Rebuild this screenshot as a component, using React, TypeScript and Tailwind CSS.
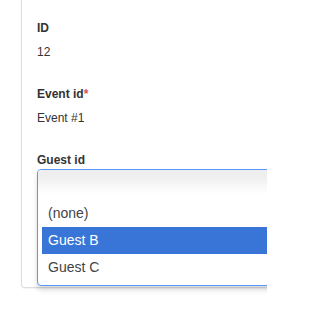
import React from "react";

export default function App() {
  return (
    <div className="w-[267px] h-[326px] overflow-hidden bg-white font-['Liberation_Sans',Arial,sans-serif] text-[#333]">
      <div className="ml-[21px] w-[400px] border-l border-b border-[#dddddd] rounded-bl-[4px] pl-[15px] pt-[20px] pb-[1px] shadow-[0_1px_1px_rgba(0,0,0,0.05)]">
        <div className="text-[12px] leading-[17px] font-bold">ID</div>
        <div className="mt-[7px] text-[12px] leading-[17px]">12</div>

        <div className="mt-[25px] text-[12px] leading-[17px] font-bold">
          Event id<span className="text-[#d9534f]">*</span>
        </div>
        <div className="mt-[7px] text-[12px] leading-[17px]">Event #1</div>

        <div className="mt-[25px] text-[12px] leading-[17px] font-bold">Guest id</div>

        <div className="w-[300px] border border-[#5897fb] rounded-[4px] bg-white shadow-[0_4px_5px_rgba(0,0,0,0.15)] overflow-hidden">
          <div className="h-[30px] bg-[linear-gradient(#eeeeee_20%,#ffffff_80%)]" />
          <ul className="ml-[4px] mb-[4px] text-[14px] leading-[15px] text-[#444]">
            <li className="h-[27px] flex items-center px-[6px]">(none)</li>
            <li className="h-[27px] flex items-center px-[6px] bg-[#3875d7] text-white">Guest B</li>
            <li className="h-[27px] flex items-center px-[6px]">Guest C</li>
          </ul>
        </div>
      </div>
    </div>
  );
}
